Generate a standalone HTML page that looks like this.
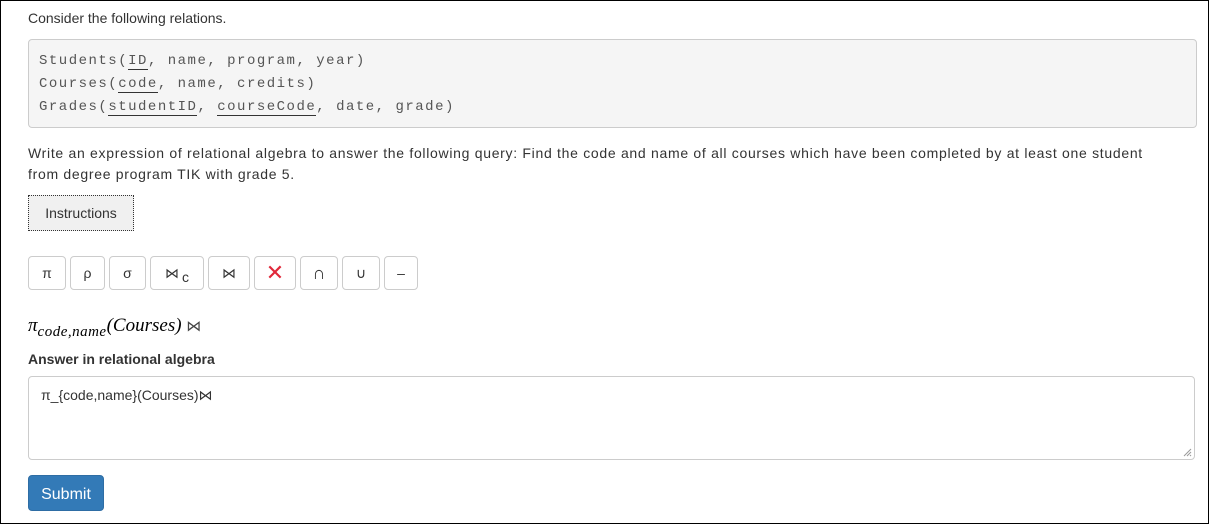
<!DOCTYPE html>
<html><head><style>
body{margin:0;width:1209px;height:524px;overflow:hidden;font-family:"Liberation Sans",sans-serif;font-size:14px;color:#333;background:#fff}
.frame{position:absolute;left:0;top:0;width:1207px;height:522px;border:1px solid #000}
.abs{position:absolute}
pre{position:absolute;left:28px;top:39px;width:1169px;height:89px;margin:0;background:#f5f5f5;border:1px solid #ccc;border-radius:4px;box-sizing:border-box;padding:10px 10px;font-family:"Liberation Mono",monospace;font-size:14px;letter-spacing:1.5px;line-height:23px;color:#555}
u{text-decoration:none;border-bottom:1px solid #333}
.b{position:absolute;top:256px;height:34px;border:1px solid #ccc;border-radius:4px;box-sizing:border-box;text-align:center;line-height:32px;font-size:14px;color:#333;background:#fff}
</style></head><body><div class="frame"></div>
<div class="abs" style="left:28px;top:10px">Consider the following relations.</div>
<pre>Students(<u>ID</u>, name, program, year)
Courses(<u>code</u>, name, credits)
Grades(<u>studentID</u>, <u>courseCode</u>, date, grade)</pre>
<div class="abs" style="left:28px;top:143px;width:1145px;line-height:21px;letter-spacing:0.7px">Write an expression of relational algebra to answer the following query: Find the code and name of all courses which have been completed by at least one student from degree program TIK with grade 5.</div>
<div class="abs" style="left:28px;top:195px;width:106px;height:36px;border:1px dotted #333;background:#f0f0f0;box-sizing:border-box;text-align:center;line-height:34px">Instructions</div>
<div class="b" style="left:28px;width:38px">π</div>
<div class="b" style="left:70px;width:35px">ρ</div>
<div class="b" style="left:109px;width:37px">σ</div>
<div class="b" style="left:150px;width:54px">⋈<span style="position:relative;top:4px;margin-left:3px">c</span></div>
<div class="b" style="left:208px;width:42px">⋈</div>
<div class="b" style="left:254px;width:42px;color:#e0283a;font-size:22px">✕</div>
<div class="b" style="left:300px;width:38px;font-size:18px">∩</div>
<div class="b" style="left:342px;width:38px">∪</div>
<div class="b" style="left:384px;width:34px">–</div>
<div class="abs" style="left:28px;top:315px;font-family:'Liberation Serif',serif;font-size:19px;font-style:italic;color:#000;white-space:nowrap">π<sub style="font-size:15px;letter-spacing:0.5px">code,name</sub>(Courses) <span style="font-style:normal;font-size:15px;color:#444">⋈</span></div>
<div class="abs" style="left:28px;top:351px;font-weight:bold">Answer in relational algebra</div>
<div class="abs" style="left:28px;top:376px;width:1167px;height:84px;border:1px solid #ccc;border-radius:4px;box-sizing:border-box;padding:10px 12px;font-size:14px">π_{code,name}(Courses)⋈
<svg style="position:absolute;right:2px;bottom:2px" width="9" height="9"><path d="M8 1L1 8M8 4L4 8M8 7L7 8" stroke="#999" stroke-width="1"/></svg></div>
<div class="abs" style="left:28px;top:475px;width:76px;height:36px;background:#337ab7;border:1px solid #2e6da4;border-radius:4px;box-sizing:border-box;color:#fff;font-size:16px;text-align:center;line-height:38px">Submit</div>
</body></html>
